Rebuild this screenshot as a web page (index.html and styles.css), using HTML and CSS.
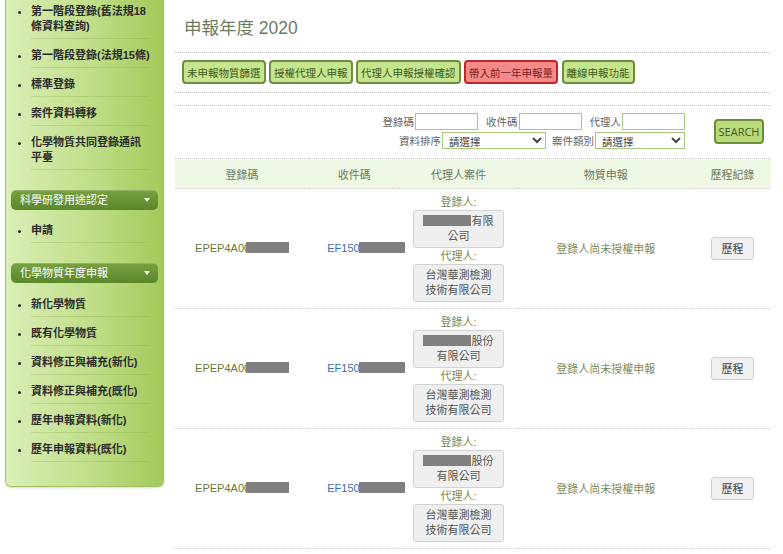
FILE: index.html
```html
<!DOCTYPE html>
<html lang="zh-Hant">
<head>
    <meta charset="UTF-8">
    <meta name="viewport" content="width=device-width, initial-scale=1.0">
    <title>申報年度 2020</title>
    <link rel="stylesheet" href="styles.css">
</head>
<body>
<div class="page">
    <aside class="sidebar">
        <ul class="side-list">
            <li>第一階段登錄(舊法規18條資料查詢)</li>
            <li>第一階段登錄(法規15條)</li>
            <li>標準登錄</li>
            <li>案件資料轉移</li>
            <li>化學物質共同登錄通訊平臺</li>
        </ul>
        <div class="side-head">科學研發用途認定<span class="caret"></span></div>
        <ul class="side-list short">
            <li>申請</li>
        </ul>
        <div class="side-head">化學物質年度申報<span class="caret"></span></div>
        <ul class="side-list long">
            <li>新化學物質</li>
            <li>既有化學物質</li>
            <li>資料修正與補充(新化)</li>
            <li>資料修正與補充(既化)</li>
            <li>歷年申報資料(新化)</li>
            <li>歷年申報資料(既化)</li>
        </ul>
    </aside>

    <main class="main">
        <h1 class="title">申報年度 2020</h1>

        <div class="toolbar">
            <button class="tool">未申報物質篩選</button>
            <button class="tool">授權代理人申報</button>
            <button class="tool">代理人申報授權確認</button>
            <button class="tool tool-red">帶入前一年申報量</button>
            <button class="tool">離線申報功能</button>
        </div>

        <div class="search">
            <div class="search-rows">
                <div class="search-row">
                    <label>登錄碼</label><input type="text" class="field">
                    <label>收件碼</label><input type="text" class="field">
                    <label>代理人</label><input type="text" class="field last">
                </div>
                <div class="search-row">
                    <label>資料排序</label>
                    <select class="pick pick-sort"><option>請選擇</option></select>
                    <label>案件類別</label>
                    <select class="pick pick-type"><option>請選擇</option></select>
                </div>
            </div>
            <button class="search-btn">SEARCH</button>
        </div>

        <table class="cases">
            <thead>
                <tr>
                    <th class="c1">登錄碼</th>
                    <th class="c2">收件碼</th>
                    <th class="c3">代理人案件</th>
                    <th class="c4">物質申報</th>
                    <th class="c5">歷程紀錄</th>
                </tr>
            </thead>
            <tbody>
                <tr>
                    <td class="reg">EPEP4A00<span class="redact"></span></td>
                    <td class="rcv">EF150<span class="redact redact-rcv"></span></td>
                    <td>
                        <div class="who">登錄人:</div>
                        <div class="party"><span class="redact redact-name"></span>有限<br>公司</div>
                        <div class="who">代理人:</div>
                        <div class="party">台灣華測檢測<br>技術有限公司</div>
                    </td>
                    <td class="status">登錄人尚未授權申報</td>
                    <td><button class="history">歷程</button></td>
                </tr>
                <tr>
                    <td class="reg">EPEP4A00<span class="redact"></span></td>
                    <td class="rcv">EF150<span class="redact redact-rcv"></span></td>
                    <td>
                        <div class="who">登錄人:</div>
                        <div class="party"><span class="redact redact-name"></span>股份<br>有限公司</div>
                        <div class="who">代理人:</div>
                        <div class="party">台灣華測檢測<br>技術有限公司</div>
                    </td>
                    <td class="status">登錄人尚未授權申報</td>
                    <td><button class="history">歷程</button></td>
                </tr>
                <tr>
                    <td class="reg">EPEP4A00<span class="redact"></span></td>
                    <td class="rcv">EF150<span class="redact redact-rcv"></span></td>
                    <td>
                        <div class="who">登錄人:</div>
                        <div class="party"><span class="redact redact-name"></span>股份<br>有限公司</div>
                        <div class="who">代理人:</div>
                        <div class="party">台灣華測檢測<br>技術有限公司</div>
                    </td>
                    <td class="status">登錄人尚未授權申報</td>
                    <td><button class="history">歷程</button></td>
                </tr>
            </tbody>
        </table>
    </main>
</div>
</body>
</html>
```

FILE: styles.css
```css
body {
  margin: 0;
  padding: 0;
  background: #fff;
  font-family: "Liberation Sans", "Noto Sans CJK TC", sans-serif;
  font-size: 11px;
  color: #333;
  overflow: hidden;
}

.page {
  display: flex;
  align-items: flex-start;
}

/* sidebar */
.sidebar {
  width: 159px;
  box-sizing: border-box;
  margin: -5px 0 0 5px;
  padding-bottom: 24px;
  background: linear-gradient(to right, #dbeeb6 0%, #c0de88 55%, #a3c95a 100%);
  border: 1px solid #a4c46a;
  border-top: none;
  border-radius: 0 0 6px 6px;
  box-shadow: 0 1px 2px rgba(90, 120, 40, 0.25);
}

.side-list {
  margin: 0;
  padding: 0 13px 0 25px;
  list-style: disc;
}
.side-list.short {
  padding-top: 4px;
}
.side-list.long {
  padding-top: 5px;
}
.side-list li {
  padding: 9px 0 4px;
  line-height: 15px;
  font-size: 11px;
  font-weight: bold;
  color: #2b2b2b;
  border-bottom: 1px solid rgba(130, 170, 70, 0.28);
}

.side-head {
  display: flex;
  justify-content: space-between;
  align-items: center;
  margin: 20px 5px 0;
  padding: 0 8px 0 9px;
  height: 20px;
  line-height: 20px;
  font-size: 11px;
  color: #fff;
  background: linear-gradient(to bottom, #78a142 0%, #5b8629 100%);
  border-radius: 5px;
  box-shadow: inset 0 1px 0 rgba(255, 255, 255, 0.2);
}
.caret {
  width: 0;
  height: 0;
  border-left: 3px solid transparent;
  border-right: 3px solid transparent;
  border-top: 4px solid #f3f8ea;
}

/* main */
.main {
  flex: 1;
  margin-left: 11px;
  padding: 16px 12px 0 0;
}

.title {
  margin: 0;
  padding: 0 0 12px 9px;
  font-size: 17.5px;
  line-height: 24px;
  font-weight: normal;
  color: #6c7c5c;
  border-bottom: 1px dotted #c8c8c8;
}

.toolbar {
  display: flex;
  gap: 3.5px;
  padding: 7px 7px 8px;
  border-bottom: 1px dotted #c8c8c8;
}
.tool {
  height: 24px;
  padding: 0 3px;
  font-family: "Noto Sans CJK TC", sans-serif;
  font-size: 10.5px;
  color: #3f5a22;
  background: #c6e58f;
  border: 2px solid #6d8f3f;
  border-radius: 4px;
}
.tool-red {
  color: #7b2323;
  background: #f58a8a;
  border-color: #c4242e;
}

.search {
  display: flex;
  justify-content: flex-end;
  align-items: center;
  margin-top: 12px;
  padding: 7px 7px 9px 0;
  border-top: 1px dotted #c8c8c8;
}
.search-rows {
  display: flex;
  flex-direction: column;
  align-items: flex-end;
  gap: 2px;
}
.search-row {
  display: flex;
  align-items: center;
}
.search-row label {
  font-family: "Noto Sans CJK TC", sans-serif;
  font-size: 10.5px;
  line-height: 17px;
  color: #666;
}
.field {
  width: 63px;
  height: 17px;
  box-sizing: border-box;
  margin: 0 8px 0 1px;
  border: 1px solid #a9c77f;
  padding: 0 2px;
}
.field.last {
  margin-right: 1px;
}
.pick {
  height: 17px;
  box-sizing: border-box;
  padding: 0 2px;
  margin-left: 1px;
  font-family: "Noto Sans CJK TC", sans-serif;
  font-size: 10.5px;
  color: #444;
  background: #fff;
  border: 1px solid #a9c77f;
  border-radius: 0;
}
.pick-sort {
  width: 104px;
  margin-right: 6px;
}
.pick-type {
  width: 90px;
  margin-right: 1px;
}
.search-btn {
  margin-left: 28px;
  width: 50px;
  height: 25px;
  padding: 0;
  font-family: "Open Sans", sans-serif;
  font-size: 11px;
  color: #3a5a20;
  background: #b9d97a;
  border: 2px solid #6a8f3a;
  border-radius: 4px;
}

/* table */
.cases {
  width: 100%;
  border-collapse: collapse;
  table-layout: fixed;
}
.cases th {
  height: 29px;
  padding: 0;
  font-weight: normal;
  font-size: 11px;
  color: #6b7b60;
  background: #eef8e5;
  border-top: 1px dotted #cfcfcf;
  border-bottom: 1px dotted #cfcfcf;
}
.c1 { width: 134px; }
.c2 { width: 90px; }
.c3 { width: 118px; }
.c4 { width: 176px; }
.c5 { width: 77px; }

.cases td {
  padding: 5px 0 6px;
  text-align: center;
  vertical-align: middle;
  border-bottom: 1px dotted #cfcfcf;
}
.reg {
  color: #6a7a3a;
  white-space: nowrap;
}
.rcv {
  color: #3c6eaa;
  white-space: nowrap;
  padding-left: 18px !important;
}
.redact {
  display: inline-block;
  width: 43px;
  height: 11px;
  margin-left: -4px;
  vertical-align: -1px;
  background: #808080;
}
.redact-rcv {
  width: 46px;
  margin-left: -1px;
}
.redact-name {
  width: 48px;
  margin-left: 0;
}

.who {
  line-height: 16px;
  color: #7a8a5a;
}
.party {
  width: 91px;
  box-sizing: border-box;
  margin: 0 auto;
  padding: 3px 0;
  line-height: 15px;
  color: #555;
  background: #efefef;
  border: 1px solid #d3d3d3;
  border-radius: 3px;
}
.status {
  color: #7b8b5b;
}
.history {
  width: 43px;
  height: 23px;
  padding: 0;
  font-family: "Noto Sans CJK TC", sans-serif;
  font-size: 11px;
  color: #444;
  background: #f0f0f0;
  border: 1px solid #cfcfcf;
  border-radius: 3px;
}
```
